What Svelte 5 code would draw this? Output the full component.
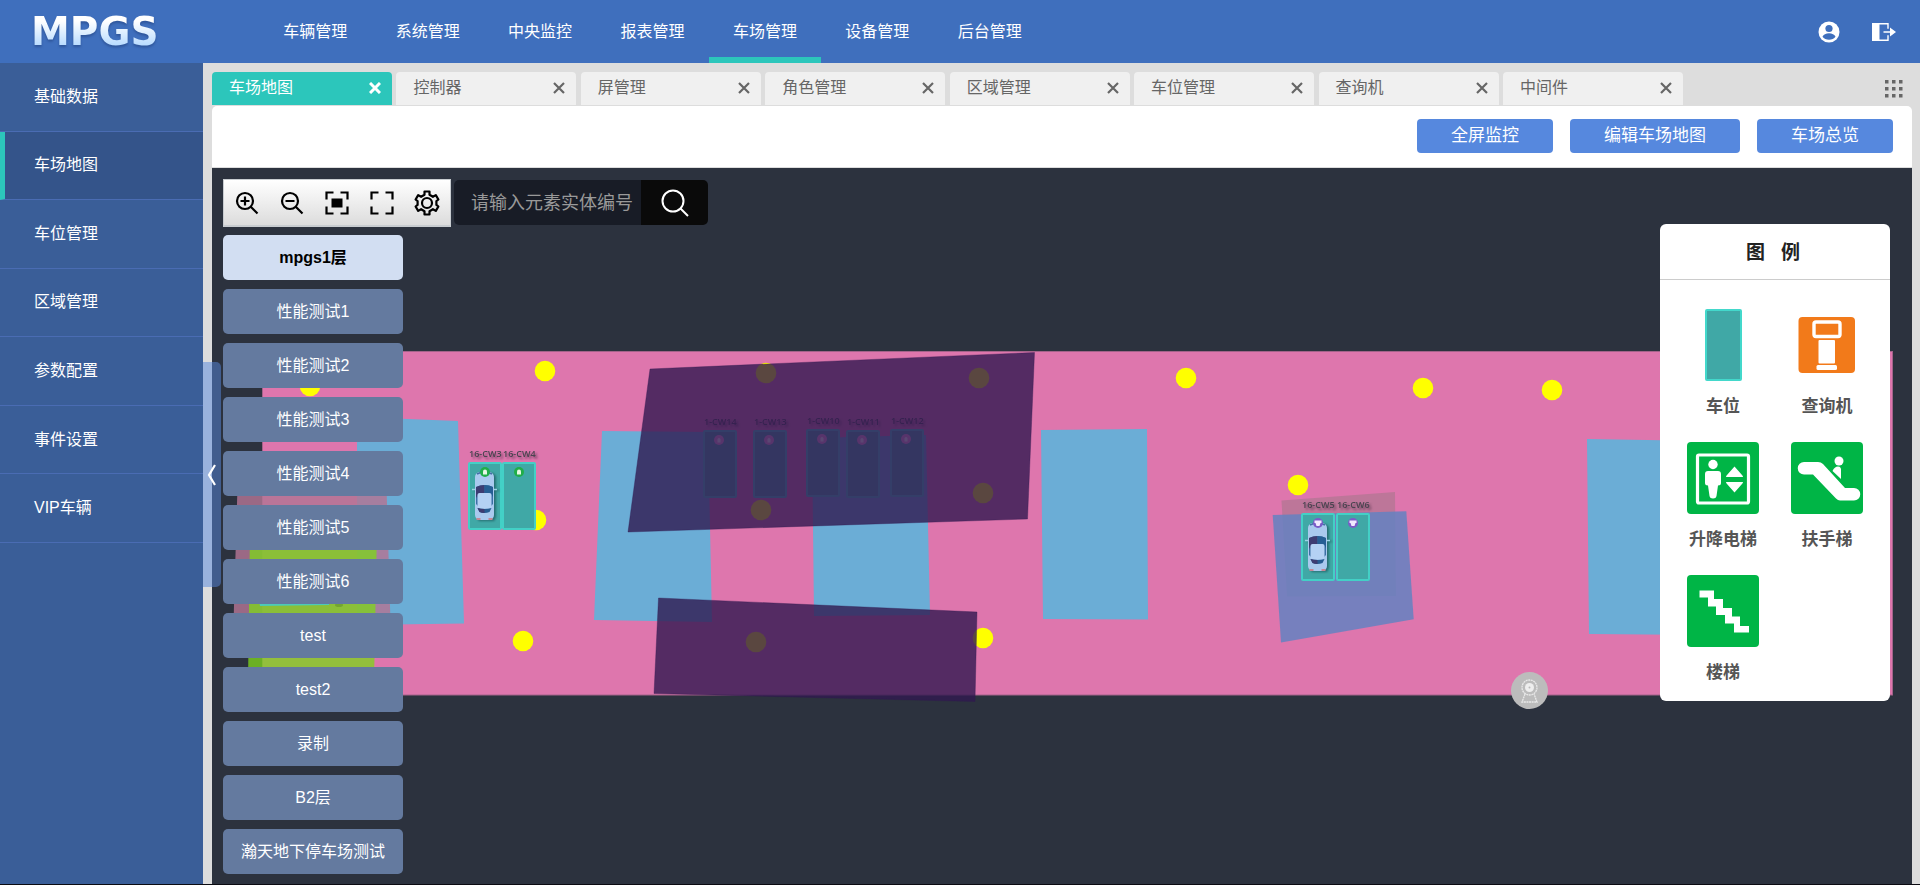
<script>
  const nav = ['车辆管理', '系统管理', '中央监控', '报表管理', '车场管理', '设备管理', '后台管理'];
  const side = ['基础数据', '车场地图', '车位管理', '区域管理', '参数配置', '事件设置', 'VIP车辆'];
  const tabs = ['车场地图', '控制器', '屏管理', '角色管理', '区域管理', '车位管理', '查询机', '中间件'];
  const floors = ['mpgs1层', '性能测试1', '性能测试2', '性能测试3', '性能测试4', '性能测试5', '性能测试6', 'test', 'test2', '录制', 'B2层', '瀚天地下停车场测试'];
  const lamps = [
    [310, 386], [545, 371], [536, 520], [523, 641], [766, 373], [979, 378], [983, 493], [761, 510],
    [756, 642], [983, 638], [1186, 378], [1423, 388], [1552, 390], [1298, 485]
  ];
  const shaded = [
    [703, 430, '1-CW14'], [753, 430, '1-CW13'], [806, 429, '1-CW10'], [846, 430, '1-CW11'], [890, 429, '1-CW12']
  ];
  const open = [
    [468, 462, '16-CW3', 'green', true], [502, 462, '16-CW4', 'green', false],
    [1301, 513, '16-CW5', 'violet', true], [1336, 513, '16-CW6', 'violet', false]
  ];
</script>

{#snippet spot(x, y, label, kind, car)}
  <g transform="translate({x} {y})">
    <text x="1" y="-5" class="spot-label">{label}</text>
    <rect x="1" y="1" width="32" height="66" rx="1" fill="#40a8a6" stroke="#43d0c6" stroke-width="2" />
    {#if car}
      <g class="car">
        <path d="M4 27.500h25" stroke="#9bd3e6" stroke-width="1.500" />
        <rect x="7" y="10" width="19" height="48" rx="5" fill="#a9c9ee" />
        <path d="M9 12q7.500-4 15 0" stroke="#416fa5" stroke-width="1.500" fill="none" />
        <path d="M8 25q8.500-4 17 0v17l-2 2H10l-2-2z" fill="#3b6fa5" />
        <path d="M8 25q4-2 8.500-2v9H10l-1 4-1-2z" fill="#3d3c72" />
        <path d="M16.500 23q5 0 8.500 2v10l-2-3h-6.500z" fill="#265e94" />
        <rect x="9.500" y="31" width="14" height="15" rx="2" fill="#b4d1f4" />
        <path d="M9.500 46q7 2 14 0l-2 4q-5 2-10 0z" fill="#255b91" />
        <path d="M9.500 46q3 1 7 1v4q-3 0-5-1z" fill="#3d3c72" />
        <path d="M8.500 57h4M20.500 57h4" stroke="#c58795" stroke-width="2" />
      </g>
    {/if}
    {#if kind === 'green'}
      <circle cx="17" cy="10" r="5" fill="#20ae49" />
      <path d="M15 12.500V9.500a2 2 0 0 1 4 0v3z" fill="#e6f7e4" />
    {:else if kind === 'violet'}
      <circle cx="17" cy="10" r="5" fill="#7b5cc7" />
      <path d="M13.500 7.500h7v2.500h-1l-1 3h-3l-1-3h-1z" fill="#f1eaff" />
    {:else}
      <circle cx="16" cy="10" r="5" fill="#f0a0d8" />
      <path d="M14.500 12.500V9.500a1.500 1.500 0 0 1 3 0v3z" fill="#fff" />
    {/if}
  </g>
{/snippet}

<div class="page">
  <header>
    <a class="logo" href="#home">MPGS</a>
    <nav>
      {#each nav as item, i}
        <a href="#{item}" class:current={i === 4}>{item}</a>
      {/each}
    </nav>
    <div class="account">
      <button aria-label="用户">
        <svg width="22" height="22" viewBox="0 0 22 22">
          <circle cx="11" cy="11" r="10.500" fill="#fff" />
          <circle cx="11" cy="7.500" r="3.600" fill="#3f6fbd" />
          <path d="M4.500 15.800c1.500-4.700 11.500-4.700 13 0-2.500 4-10.500 4-13 0z" fill="#3f6fbd" />
        </svg>
      </button>
      <button aria-label="退出">
        <svg width="24" height="20" viewBox="0 0 24 20">
          <path d="M0 1h7.500v18H0z" fill="#fff" />
          <path d="M7 1.700h9v5M7 18.300h9v-5" fill="none" stroke="#fff" stroke-width="1.400" />
          <path d="M11.500 9.200H18V5.500l6 4.500-6 4.500v-3.700h-6.500z" fill="#fff" />
        </svg>
      </button>
    </div>
  </header>

  <div class="body">
    <aside>
      <ul>
        {#each side as item, i}
          <li class:current={i === 1}><a href="#{item}">{item}</a></li>
        {/each}
      </ul>
      <button class="handle" aria-label="收起菜单">
        <svg width="10" height="22" viewBox="0 0 10 22"><path d="M8 1 2 11l6 10" fill="none" stroke="#fff" stroke-width="2.200" /></svg>
      </button>
    </aside>

    <main>
      <div class="tabbar">
        <div class="tabs">
          {#each tabs as tab, i}
            <div class="tab" class:current={i === 0}>
              <a href="#{tab}">{tab}</a>
              <button aria-label="关闭">
                <svg width="12" height="12" viewBox="0 0 12 12"><path d="m1 1 10 10M11 1 1 11" stroke="currentColor" stroke-width={i === 0 ? 3 : 2.2} /></svg>
              </button>
            </div>
          {/each}
        </div>
        <button class="more" aria-label="更多">
          <svg width="18" height="18" viewBox="0 0 18 18">
            {#each [0, 7, 14] as x}
              {#each [0, 7, 14] as y}
                <rect {x} {y} width="3.500" height="3.500" fill="#666" />
              {/each}
            {/each}
          </svg>
        </button>
      </div>

      <div class="actions">
        <button>全屏监控</button>
        <button>编辑车场地图</button>
        <button>车场总览</button>
      </div>

      <section class="map">
        <svg class="plan" viewBox="212 168 1700 716" preserveAspectRatio="xMinYMin meet" aria-hidden="true">
          <rect x="262.500" y="351.500" width="1630" height="343.500" fill="#de76ad" stroke="#a4638a" />
          <g fill="#6badd6">
            <path d="M357 417 458 421l6 202.500L357 625z" />
            <path d="m602 431 106 1 4 190-118-2z" />
            <path d="m812 438 114-3 4 180-116 1z" />
            <path d="m1041 430 106-1 1 190.500-105-.500z" />
            <path d="m1587 439 120 2v194l-118-1z" />
          </g>
          {#each lamps as [x, y]}
            <circle cx={x} cy={y} r="10.300" fill="#ff0" />
          {/each}
          <path d="M238 470h148l5 170H233z" fill="rgb(178 117 148 / .83)" />
          <path d="m250 530 127-2-3 154H248z" fill="rgb(126 211 30 / .78)" />
          <path d="m259 600 70-2v7l-69 1z" fill="#4ccab8" />
          <ellipse cx="339" cy="605" rx="4" ry="2" fill="#74a431" />
          {#each shaded as [x, y, label]}
            {@render spot(x, y, label, 'pink', false)}
          {/each}
          <g fill="rgb(49 25 80 / .8)" stroke="rgb(49 25 80 / .35)">
            <path d="m650 369 384.500-16.500-7 166.500-399.500 13z" />
            <path d="m658.500 598 318.500 14-2 89.500-321-8z" />
          </g>
          <path d="m1281.500 500.500 113.500-8.500 1 104-109 .500z" fill="#bd7699" />
          <path d="m1272.700 515 133.600-3.700 7.400 108L1281 642.500z" fill="rgb(100 130 193 / .85)" />
          {#each open as [x, y, label, kind, car]}
            {@render spot(x, y, label, kind, car)}
          {/each}
          <circle cx="1529.500" cy="690.500" r="18.500" fill="#bcbcbc" />
          <g fill="none" stroke="#e9e9e9" stroke-width="1.300">
            <circle cx="1529.500" cy="687.500" r="7.500" stroke-dasharray="2 .6" />
            <path d="m1525 694-3 8h15l-3-8" stroke-dasharray="2 .6" />
          </g>
          <circle cx="1529.500" cy="687.500" r="4.500" fill="#eee" />
          <circle cx="1529.500" cy="687.500" r="1" fill="#bbb" />
        </svg>

        <div class="controls">
          <div class="tools">
            <button aria-label="放大">
              <svg width="24" height="24" viewBox="0 0 24 24"><circle cx="10" cy="10" r="8" /><path d="m15.500 15.500 7 7M5.500 10h9M10 5.500v9" /></svg>
            </button>
            <button aria-label="缩小">
              <svg width="24" height="24" viewBox="0 0 24 24"><circle cx="10" cy="10" r="8" /><path d="m15.500 15.500 7 7M5.500 10h9" /></svg>
            </button>
            <button aria-label="适应">
              <svg width="24" height="24" viewBox="0 0 24 24"><path d="M1.500 8.500v-7h7M15.500 1.500h7v7M22.500 15.500v7h-7M8.500 22.500h-7v-7" /><path d="M6.500 7.500h11v9h-11z" class="solid" /></svg>
            </button>
            <button aria-label="全屏">
              <svg width="24" height="24" viewBox="0 0 24 24"><path d="M1.500 8.500v-7h7M15.500 1.500h7v7M22.500 15.500v7h-7M8.500 22.500h-7v-7" /></svg>
            </button>
            <button aria-label="设置">
              <svg width="26" height="26" viewBox="0 0 26 26"><circle cx="13" cy="13" r="5" /><path d="M10.500 1.500h5v3.300l3.400 2 2.900-1.700 2.600 4.400-2 1.600v3.800l2 1.600-2.600 4.400-2.900-1.700-3.400 2v3.300h-5v-3.300l-3.400-2-2.900 1.700-2.600-4.400 2-1.600v-3.800l-2-1.600 2.600-4.400 2.900 1.700 3.400-2z" stroke-linejoin="round" /></svg>
            </button>
          </div>
          <form class="search" onsubmit={(e) => e.preventDefault()}>
            <input type="text" aria-label="元素实体编号" placeholder="请输入元素实体编号" />
            <button aria-label="搜索">
              <svg width="28" height="28" viewBox="0 0 28 28"><circle cx="12" cy="12" r="10.500" /><path d="m19.500 19.500 7.500 7.500" /></svg>
            </button>
          </form>
        </div>

        <div class="floors">
          {#each floors as floor, i}
            <button class:current={i === 0}>{floor}</button>
          {/each}
        </div>

        <div class="legend">
          <h2>图&nbsp;&nbsp; 例</h2>
          <ul>
            <li>
              <svg viewBox="0 0 72 72"><rect x="19" y="1" width="35" height="70" rx="1" fill="#40a8a6" stroke="#43d8cb" stroke-width="2" /></svg>
              <span>车位</span>
            </li>
            <li>
              <svg viewBox="0 0 72 72">
                <rect x="7.500" y="8" width="56.500" height="56" rx="4" fill="#f27a1a" />
                <rect x="23" y="13" width="26" height="14.500" rx="2" fill="none" stroke="#fff" stroke-width="3.400" />
                <rect x="27.500" y="31" width="16.500" height="23.500" rx="1" fill="#fff" />
                <rect x="25.500" y="56" width="20.500" height="5" rx="1.500" fill="#fff" />
              </svg>
              <span>查询机</span>
            </li>
            <li>
              <svg viewBox="0 0 72 72">
                <rect width="72" height="72" rx="4" fill="#00b546" />
                <rect x="10.500" y="13" width="51" height="48" rx="1.500" fill="none" stroke="#fff" stroke-width="3.200" />
                <circle cx="26" cy="22.500" r="4.700" fill="#fff" />
                <path d="M21 29h10q3 0 3 3v9q0 2.500-3 2.500L29.500 54q-.500 2.500-3.500 2.500t-3.500-2.500L21 43.500q-3 0-3-2.500v-9q0-3 3-3z" fill="#fff" />
                <path d="M39 35q0-1 1-2l7.500-8.500L55 33q1 1 1 2zM39 40h17q0 1-1 2l-7.500 8.500L40 42q-1-1-1-2z" fill="#fff" />
              </svg>
              <span>升降电梯</span>
            </li>
            <li>
              <svg viewBox="0 0 72 72">
                <rect width="72" height="72" rx="4" fill="#00b546" />
                <path d="M13 20h14q3 0 5 2l22 24h9a6.200 6.200 0 0 1 0 12.500H49q-2 0-4-2L22 32.500h-9A6.200 6.200 0 0 1 13 20z" fill="#fff" />
                <circle cx="48" cy="19" r="4.500" fill="#fff" />
                <path d="M41.500 29q2-4.500 5.500-4.500T50 29v8z" fill="#fff" />
              </svg>
              <span>扶手梯</span>
            </li>
            <li>
              <svg viewBox="0 0 72 72">
                <rect width="72" height="72" rx="4" fill="#00b546" />
                <path d="M12.500 15.500H27V24h9v9h9v8.500h8v9.500h9v6.500H47V48.500h-9V40h-9v-8.500h-8v-9h-8.500z" fill="#fff" />
              </svg>
              <span>楼梯</span>
            </li>
          </ul>
        </div>
      </section>
    </main>
  </div>
  <footer></footer>
</div>

<style>
  :global(body) {
    margin: 0;
    overflow: hidden;
  }
  * {
    box-sizing: border-box;
  }
  .page {
    display: flex;
    flex-direction: column;
    height: 100vh;
    background: #ddd;
    font: 16px/24px 'Liberation Sans', 'Noto Sans CJK SC', sans-serif;
  }
  button {
    display: flex;
    align-items: center;
    justify-content: center;
    padding: 0;
    border: 0;
    background: none;
    color: inherit;
    font: inherit;
    cursor: pointer;
  }
  a {
    color: inherit;
    text-decoration: none;
  }
  ul {
    margin: 0;
    padding: 0;
    list-style: none;
  }
  header {
    display: flex;
    flex: none;
    height: 63px;
    padding: 0 24px 0 31px;
    background: #3f6fbd;
    color: #fff;
  }
  .logo {
    width: 228px;
    align-self: center;
    background: linear-gradient(#fff 25%, #b9dcff 80%);
    background-clip: text;
    color: transparent;
    filter: drop-shadow(0 2px 1px rgb(30 60 120 / 0.5));
    font: bold 39px/44px 'DejaVu Sans', sans-serif;
  }
  nav {
    display: grid;
    grid-template-columns: repeat(7, 1fr);
    width: 787px;
  }
  nav a {
    display: flex;
    align-items: center;
    justify-content: center;
    border: solid transparent;
    border-width: 6px 0;
  }
  nav a.current {
    border-bottom-color: #2cc6bb;
  }
  .account {
    display: flex;
    gap: 32px;
    margin-left: auto;
  }
  .body {
    display: flex;
    flex: 1;
    min-height: 0;
  }
  aside {
    position: relative;
    flex: none;
    width: 203px;
    background: #3a5e98;
    color: #fff;
  }
  aside ul {
    display: grid;
    grid-template-rows: repeat(7, 1fr);
    height: 480px;
  }
  aside li {
    display: flex;
    align-items: center;
    padding-left: 34px;
    border-bottom: 1px solid #4a6cb3;
  }
  aside li.current {
    padding-left: 29px;
    border-left: 5px solid #2cc6bb;
    background: #34548a;
  }
  .handle {
    position: absolute;
    z-index: 2;
    top: 299px;
    left: 100%;
    width: 18px;
    height: 225px;
    border-radius: 0 5px 5px 0;
    background: rgb(86 136 222 / 0.5);
  }
  main {
    display: flex;
    flex: 1;
    flex-direction: column;
    min-width: 0;
    padding: 9px 8px 0 9px;
  }
  .tabbar {
    display: flex;
    align-items: center;
    justify-content: space-between;
    padding-right: 9px;
  }
  .tabs {
    display: flex;
    justify-content: space-between;
    width: 1471px;
  }
  .tab {
    display: flex;
    align-items: center;
    justify-content: space-between;
    width: 180px;
    height: 33px;
    padding: 0 11px 2px 17px;
    border-radius: 4px 4px 0 0;
    background: #f0f0f0;
    color: #666;
  }
  .tab.current {
    background: #2cc6bb;
    color: #fff;
  }
  .actions {
    display: flex;
    flex: none;
    gap: 17px;
    justify-content: flex-end;
    height: 61px;
    margin: 1px 0;
    padding: 13px 19px 0 0;
    border-radius: 5px 5px 0 0;
    background: #fff;
  }
  .actions button {
    height: 34px;
    padding: 0 34px;
    border-radius: 4px;
    background: #5688de;
    color: #fff;
    font-size: 17px;
  }
  .map {
    position: relative;
    flex: 1;
    min-height: 0;
    padding: 11px;
    overflow: hidden;
    background: #2c323e;
  }
  .plan {
    position: absolute;
    inset: 0;
    width: 100%;
    height: 100%;
  }
  .spot-label {
    fill: #4a4450;
    font: 600 9px 'Open Sans', sans-serif;
    filter: drop-shadow(2px 2px 1px rgb(60 40 60 / 0.6));
  }
  .car {
    filter: drop-shadow(2px 1px 1px rgb(20 70 80 / 0.6));
  }
  .controls {
    position: relative;
    display: flex;
    gap: 3px;
    align-items: center;
    height: 48px;
  }
  .tools {
    display: grid;
    grid-template-columns: repeat(5, 45px);
    height: 48px;
    padding-right: 1px;
    border: 1px solid #c8ccd0;
    border-bottom-width: 2px;
    background: linear-gradient(#fff, #dcdcdc);
  }
  .tools svg {
    fill: none;
    stroke: #000;
    stroke-width: 2.2;
  }
  .tools .solid {
    fill: #000;
    stroke: none;
  }
  .search {
    display: flex;
    height: 45px;
    margin-top: -1px;
    overflow: hidden;
    border-radius: 5px;
  }
  .search input {
    width: 187px;
    padding: 0 0 0 17px;
    border: 0;
    background: #181c26;
    color: #fff;
    font: inherit;
    font-size: 18px;
  }
  .search input::placeholder {
    color: #999;
    opacity: 1;
  }
  .search button {
    width: 67px;
    background: #0a0a0a;
  }
  .search svg {
    fill: none;
    stroke: #fff;
    stroke-width: 2;
  }
  .floors {
    position: relative;
    display: flex;
    flex-direction: column;
    gap: 9px;
    width: 180px;
    margin-top: 8px;
  }
  .floors button {
    height: 45px;
    border-radius: 5px;
    background: #647a9f;
    color: #fff;
  }
  .floors button.current {
    background: #d2def2;
    color: #000;
    font-weight: bold;
  }
  .legend {
    position: absolute;
    top: 56px;
    right: 22px;
    width: 230px;
    border-radius: 6px;
    background: #fff;
  }
  .legend h2 {
    margin: 0;
    padding: 2px 4px 0 0;
    border-bottom: 1px solid #ccc;
    color: #222;
    font-size: 19px;
    line-height: 53px;
    text-align: center;
  }
  .legend ul {
    display: grid;
    grid-template-columns: 72px 72px;
    gap: 23px 32px;
    padding: 29px 27px 16px;
  }
  .legend li {
    display: flex;
    flex-direction: column;
    gap: 14px;
    align-items: center;
    color: #555;
    font-size: 17px;
    font-weight: bold;
    white-space: nowrap;
  }
  .legend svg {
    width: 72px;
    height: 72px;
  }
  footer {
    flex: none;
    height: 1px;
    background: #0b0b12;
  }
</style>
